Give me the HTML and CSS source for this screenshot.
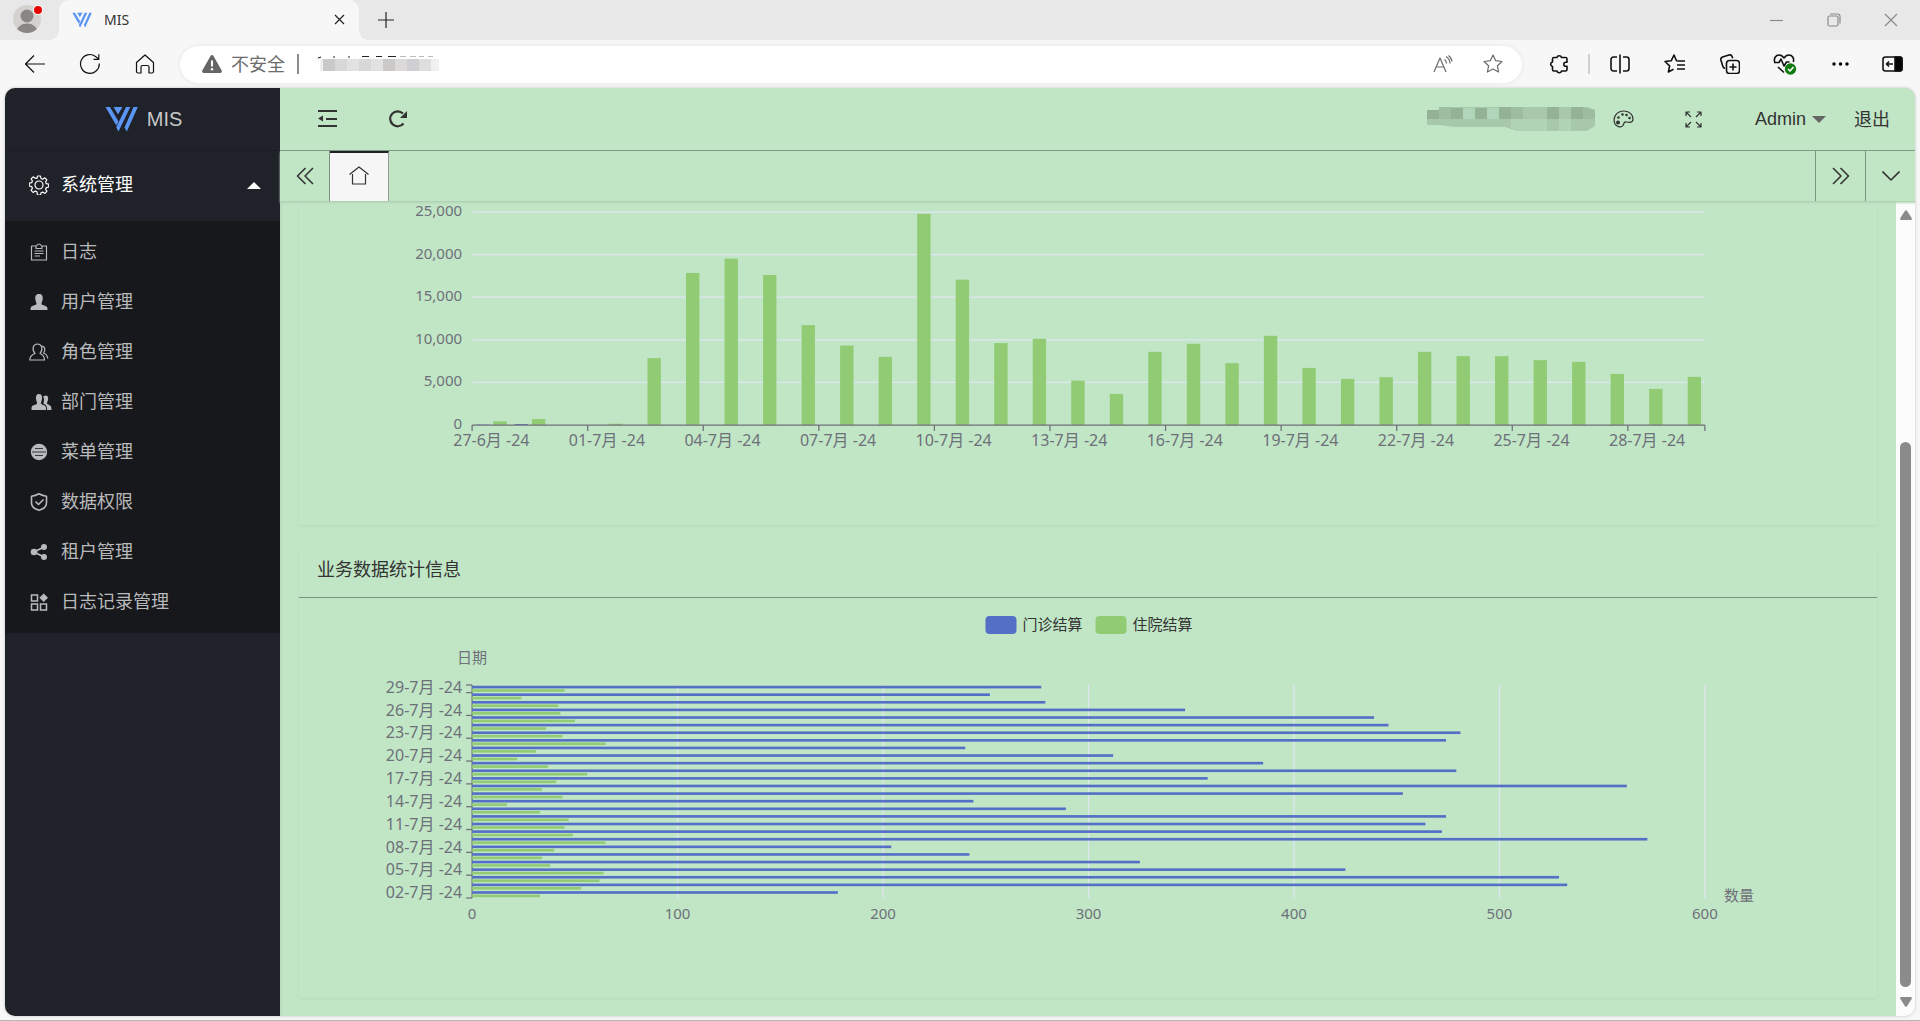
FILE: index.html
```html
<!DOCTYPE html>
<html lang="zh-CN">
<head>
<meta charset="utf-8">
<title>MIS</title>
<link rel="stylesheet" href="styles.css">
</head>
<body>
<header class="titlebar">
  <button class="profile" aria-label="Profile">
    <svg width="32" height="32" viewBox="0 0 32 32"><defs><clipPath id="face"><circle cx="14" cy="17" r="14"/></clipPath></defs><circle cx="14" cy="17" r="14" fill="#d4d2ce"/><g clip-path="url(#face)" fill="#8a8683"><circle cx="14" cy="14" r="6.500"/><ellipse cx="14" cy="30" rx="10.500" ry="8.500"/></g><circle cx="25" cy="8" r="5" fill="#fff"/><circle cx="25" cy="8" r="4" fill="#e60000"/></svg>
  </button>
  <div class="browser-tab">
    <svg width="20" height="16" viewBox="0 0 33 26" fill="#5b96f5"><use href="#mark"/></svg>
    <span class="tab-title">MIS</span>
    <button class="tab-close" aria-label="Close tab"><svg width="11" height="11" viewBox="0 0 11 11" class="ln"><path d="M1 1l9 9M10 1l-9 9"/></svg></button>
  </div>
  <button class="new-tab" aria-label="New tab"><svg width="18" height="18" viewBox="0 0 18 18" class="ln"><path d="M9 1v16M1 9h16"/></svg></button>
  <div class="window-buttons">
    <button aria-label="Minimize"><svg width="14" height="14" viewBox="0 0 14 14" class="ln"><path d="M0 7.500h13"/></svg></button>
    <button aria-label="Restore"><svg width="14" height="14" viewBox="0 0 14 14" class="ln"><rect x="1" y="3" width="10" height="10" rx="1.500"/><path d="M3 1h7.500a2.500 2.500 0 0 1 2.500 2.500V10.500"/></svg></button>
    <button aria-label="Close"><svg width="14" height="14" viewBox="0 0 14 14" class="ln"><path d="M1 1l12 12M13 1L1 13"/></svg></button>
  </div>
</header>

<nav class="toolbar">
  <button aria-label="Back"><svg width="22" height="20" viewBox="0 0 22 20" class="ln"><path d="M21 10H1.500M10 1.500L1.500 10l8.500 8.500"/></svg></button>
  <button aria-label="Reload"><svg width="22" height="22" viewBox="0 0 22 22" class="ln"><path d="M20.300 10.500A9.400 9.400 0 1 1 16.500 3.400L19.500 6M19.800 1.200V6.300H14.500"/></svg></button>
  <button aria-label="Home"><svg width="20" height="20" viewBox="0 0 20 20" class="ln"><path d="M1.500 8.500L10 1l8.500 7.500V17.500a1.500 1.500 0 0 1-1.500 1.500h-3v-6a1.500 1.500 0 0 0-1.500-1.500h-5A1.500 1.500 0 0 0 6 13v6H3a1.500 1.500 0 0 1-1.500-1.500z"/></svg></button>
  <div class="address">
    <button class="security">
      <svg width="20" height="18" viewBox="0 0 20 18"><path d="M8.500 1a1.700 1.700 0 0 1 3 0l8.200 14.500a1.700 1.700 0 0 1-1.500 2.500H1.800a1.700 1.700 0 0 1-1.500-2.500z" fill="#666"/><path d="M10 5.500v6" stroke="#fff" stroke-width="2"/><circle cx="10" cy="14.200" r="1.200" fill="#fff"/></svg>
      <span>不安全</span>
    </button>
    <span class="sep"></span>
    <svg class="masked-url" width="122" height="16" viewBox="0 0 122 16"><path d="M1 2l3-1M16 1h2M31 1h2M45 .500h7M59 .500h6M71 .500h8" stroke="#222" stroke-width="1.200"/><path d="M83 .500h6M93 .500h6M102 .500h5M111 .500h5" stroke="#bbb"/><g><path fill="#f0f0f0" d="M3 3h119v12H3z"/><path fill="#c9c9c9" d="M6 3h12v12H6z"/><path fill="#d8d8d8" d="M18 3h12v12H18zM42 3h12v12H42z"/><path fill="#e2e2e2" d="M30 3h12v12H30zM54 3h12v12H54z"/><path fill="#cbc9c8" d="M66 3h12v12H66z"/><path fill="#dcdad8" d="M78 3h12v12H78z"/><path fill="#cfcfd3" d="M90 3h12v12H90z"/><path fill="#dedede" d="M102 3h12v12h-12z"/></g></svg>
    <div class="address-actions">
      <button aria-label="Read aloud"><svg width="20" height="18" viewBox="0 0 20 18" class="ln"><path d="M1 17L7 3l6 14M3 12h8M11.500 4.500q2 1.500 2 4M13 1.500q4 2.500 4 7M15.500 .500q3 2 3.500 6"/></svg></button>
      <button aria-label="Favourite"><svg width="20" height="20" viewBox="0 0 20 20" class="ln"><path d="M10 1l2.700 5.700 6.300.8-4.600 4.300 1.200 6.200L10 15l-5.600 3 1.200-6.200L1 7.500l6.300-.8z"/></svg></button>
    </div>
  </div>
  <button class="ext" aria-label="Extensions"><svg width="20" height="20" viewBox="0 0 20 20" class="ln bold"><path d="M5 3.500h3a2.300 2.300 0 0 1 4.500 0H16.500a1.500 1.500 0 0 1 1.500 1.500v3.200h-1.200a2 2 0 0 0 0 4H18V15.500a1.500 1.500 0 0 1-1.500 1.500h-4a2.300 2.300 0 0 1-4.500 0H5a1.500 1.500 0 0 1-1.500-1.500V12.500a2.300 2.300 0 0 1 0-4.500V5A1.500 1.500 0 0 1 5 3.500z"/></svg></button>
  <span class="sep light"></span>
  <button aria-label="Split screen"><svg width="20" height="20" viewBox="0 0 20 20" class="ln bold"><path d="M7 3H3.500A2.500 2.500 0 0 0 1 5.500v9A2.500 2.500 0 0 0 3.500 17H7M13 3h3.500A2.500 2.500 0 0 1 19 5.500v9A2.500 2.500 0 0 1 16.500 17H13M10 .500v19"/></svg></button>
  <button aria-label="Favourites"><svg width="21" height="20" viewBox="0 0 21 20" class="ln bold"><path d="M14.500 7L12.500 6.700 10 1 7.300 6.700 1 7.500l4.600 4.300L4.400 18 9.500 15.300M13 7h8M13 11h8M13 15h8"/></svg></button>
  <button aria-label="Collections"><svg width="20" height="20" viewBox="0 0 20 20" class="ln bold"><path d="M5 14.500C3.500 14 3 13 2.700 12L.900 6C.500 4.500 1.300 3.500 2.500 3L9 1c1.500-.400 2.700.3 3.200 1.700l.5 1.500"/><rect x="6.500" y="6.500" width="13" height="13" rx="3"/><path d="M13 9.500v7M9.500 13h7"/></svg></button>
  <button aria-label="Browser essentials"><svg width="24" height="22" viewBox="0 0 24 22" class="ln bold"><path d="M1.700 9C.500 5 3 2 6 2c2.500 0 4 1.500 5 3 1-1.500 2.500-3 5-3 3 0 5.500 3 4.300 7M5 14l6 5.500M1 9.500h5l2-3.500 3 7 2.500-4h3"/><circle cx="17.500" cy="16" r="5.700" fill="#107c10" stroke="none"/><path d="M15 16l2 2 3.500-4" stroke="#fff"/></svg></button>
  <button aria-label="More"><svg width="18" height="6" viewBox="0 0 18 6"><circle cx="3" cy="3" r="1.700"/><circle cx="9.500" cy="3" r="1.700"/><circle cx="16" cy="3" r="1.700"/></svg></button>
  <button class="side-toggle" aria-label="Sidebar"><svg width="21" height="16" viewBox="0 0 21 16" class="ln bold"><rect x="1" y="1" width="19" height="14" rx="2.500"/><path d="M13 1h5a2 2 0 0 1 2 2v10a2 2 0 0 1-2 2h-5z" fill="#000"/><path d="M11 8H4.500M7 5.500L4.500 8 7 10.500"/></svg></button>
</nav>

<div class="app">
  <aside class="sidebar">
    <a class="logo" href="#"><svg width="33" height="26" viewBox="0 0 33 26" fill="#5b96f5"><g id="mark"><path d="M.500 1h4.500l8.500 14.500-2.200 4z"/><path d="M8.500 1h9l-4.500 7.500z"/><path d="M21 1h4.300L13.500 25.500 11.200 21.500z"/><path d="M28.500 1h4.300L21.800 25.500 19.500 21.500z"/></g></svg><span>MIS</span></a>
    <button class="group">
      <svg width="20" height="20" viewBox="0 0 20 20" class="ln"><path d="M8.500 1h3l.5 2.500 1.700.7 2.200-1.400 2 2-1.300 2.200.7 1.700 2.400.500v2.800l-2.400.6-.700 1.700 1.300 2.100-2 2-2.200-1.300-1.700.7-.500 2.400h-3L8 16.800l-1.700-.7-2.200 1.300-2-2 1.300-2.100-.7-1.700-2.400-.6V8.200l2.400-.500.7-1.700-1.300-2.200 2-2 2.200 1.400L8 3.500z"/><circle cx="10" cy="10" r="4"/></svg>
      <span>系统管理</span>
      <svg class="caret" width="14" height="7" viewBox="0 0 14 7"><path d="M0 7l7-7 7 7z" fill="#fff"/></svg>
    </button>
    <nav class="submenu">
      <a href="#"><svg width="20" height="18" viewBox="0 0 20 18" class="ln"><path d="M7 3H2.500v14h15V3H13M5.500 8h9M5.500 10.500h9M5.500 13h5.500M7 5.500V3.500q3-5 6 0v2z"/></svg><span>日志</span></a>
      <a href="#"><svg width="20" height="18" viewBox="0 0 20 18"><path d="M10 1c3 0 4 2 3.700 5-.3 2.500-1.200 3.500-1.200 5 0 1 4 1.700 5 2.500 1 .700 1 2 1 3.500h-17c0-1.500 0-2.800 1-3.500 1-.800 5-1.500 5-2.500 0-1.500-.900-2.500-1.200-5C6 3 7 1 10 1z"/></svg><span>用户管理</span></a>
      <a href="#"><svg width="20" height="18" viewBox="0 0 20 18" class="ln"><path d="M6 10.500C2.500 6 4 1 8.500 1s6 5 2.500 9.500c3 1.200 4.500 3 4.500 6.500H.800c0-3.500 2-5.300 5.200-6.500zM12.500 3c3.500 0 4.300 4 2 7 3 1 4 3 4.300 5.500"/></svg><span>角色管理</span></a>
      <a href="#"><svg width="20" height="18" viewBox="-1 0 20 18"><path d="M9 1c2.500 0 3.500 2 3 5-.3 2-1 3-1 4.500 0 1 3 1.500 4 2.300 1 .700 1 2.200 1 4.200H1.500c0-2 0-3.500 1-4.200 1-.800 4.500-1.300 4.500-2.300C7 9 6.300 8 6 6 5.500 3 6.500 1 9 1zM15.500 2.500c2.500 0 3 2 2.500 4.200-.3 1.800-1 2.300-1 3.800 0 .800 2.500 1.300 3.500 2.300.7.700 1 2.200 1 4.200H17c0-4-.500-5-3.500-6.300 0-1.700 1.500-4.700-.5-7.200z"/></svg><span>部门管理</span></a>
      <a href="#"><svg width="20" height="18" viewBox="0 0 20 18"><circle cx="10" cy="9" r="8.200"/><path d="M6 5.500h8M3 9h14M6 12.500h8" stroke="#17181c" stroke-width=".8"/></svg><span>菜单管理</span></a>
      <a href="#"><svg width="20" height="18" viewBox="0 0 20 18" class="ln bold"><path d="M10 .800c2.500 1.500 5 2.200 7.500 2.400V10c0 3.500-3 6-7.500 7.300C5.500 16 2.500 13.500 2.500 10V3.200C5 3 7.500 2.300 10 .800zM6.500 8.500l3 3 5-5"/></svg><span>数据权限</span></a>
      <a href="#"><svg width="20" height="18" viewBox="0 0 20 18"><path d="M15 4L5 9l10 5" fill="none" stroke="#b9babb" stroke-width="1.800"/><circle cx="15" cy="4" r="3"/><circle cx="15" cy="14" r="3"/><circle cx="5" cy="9" r="3.300"/></svg><span>租户管理</span></a>
      <a href="#"><svg width="20" height="18" viewBox="0 0 20 18"><path d="M2.500 2h6v6h-6zM2.500 11h6v6h-6zM11.500 11h6v6h-6z" fill="none" stroke="#b9babb" stroke-width="1.500"/><path d="M14.700 .500l4.300 4.200-4.300 4.300-4.300-4.300z"/></svg><span>日志记录管理</span></a>
    </nav>
  </aside>

  <main class="main">
    <div class="topbar">
      <button class="tool" aria-label="Collapse menu"><svg width="20" height="18" viewBox="0 0 20 18"><path d="M0 0h19v2H0zM8 8h11v2H8zM0 15h19v2H0zM0 8.500L5 5.500v6z" fill="#333"/></svg></button>
      <button class="tool" aria-label="Refresh"><svg width="19" height="18" viewBox="0 0 19 18"><path d="M14.500 13.500A7.500 7.500 0 1 1 14 3.500" fill="none" stroke="#333" stroke-width="2.200"/><path d="M18 1v7h-7z" fill="#333"/></svg></button>
      <svg class="masked-name" width="168" height="24" viewBox="0 0 168 24"><path d="M0 3h12V0h148l8 3v16l-8 5H90l-12-4H28l-16-2H0z" fill="#a8c8ac"/><path d="M0 3h12v9H0zM24 1h12v11H24zM48 1h12v11H48zM72 0h12v12H72zM120 0h12v12h-12zM144 0h12v12h-12z" fill="#93b296"/><path d="M36 1h12v11H36zM60 1h12v11H60z" fill="#afd6b8"/><path d="M12 0h12v12H12zM84 0h12v12H84zM156 0l12 3v9h-12z" fill="#9dbda1"/><path d="M84 12h36v12H92l-8-3zM132 12h12v12h-12z" fill="#b0d3b6"/></svg>
      <button class="tool narrow" aria-label="Theme"><svg width="21" height="18" viewBox="0 0 21 18" class="ln"><path d="M2 14C-1 7 4 1 11 1c6 0 9 4.500 9 8 0 4-3.500 3.500-6.500 3-3-.500-2.500 1.500-3.500 3.500-1.500 2.500-6.500 1.500-8-1.500z"/><g fill="#333" stroke="none"><circle cx="5" cy="12.500" r="2"/><circle cx="5.500" cy="7.500" r="1.300"/><circle cx="9.500" cy="4.500" r="1.300"/><circle cx="13.500" cy="5" r="1.300"/><circle cx="16.500" cy="8" r="1.300"/></g></svg></button>
      <button class="tool narrow" aria-label="Full screen"><svg width="17" height="17" viewBox="0 0 17 17" class="ln"><path d="M1 5V1h4M1 1l5 5M12 1h4v4M16 1l-5 5M16 12v4h-4M16 16l-5-5M5 16H1v-4M1 16l5-5"/></svg></button>
      <button class="user">Admin<svg width="14" height="7" viewBox="0 0 14 7"><path d="M0 0h14L7 7z" fill="#666"/></svg></button>
      <a class="logout" href="#">退出</a>
    </div>
    <div class="tabs">
      <button class="scroll-tabs first" aria-label="Previous tabs"><svg width="18" height="18" viewBox="0 0 18 18" class="ln bold"><path d="M9.500 1L1.500 9l8 8M17 1L9 9l8 8"/></svg></button>
      <button class="page-tab" aria-label="Home page"><svg width="20" height="19" viewBox="0 0 20 19" class="ln"><path d="M.500 8.500L10 1l9.500 7.500M3.500 8v10h13V8"/></svg></button>
      <span class="tab-space"></span>
      <button class="scroll-tabs" aria-label="Next tabs"><svg width="18" height="18" viewBox="0 0 18 18" class="ln bold"><path d="M1 1l8 8-8 8M8.500 1l8 8-8 8"/></svg></button>
      <button class="scroll-tabs" aria-label="Tab menu"><svg width="18" height="10" viewBox="0 0 18 10" class="ln bold"><path d="M.500 .500L9 9l8.500-8.500"/></svg></button>
    </div>
    <div class="viewport">
      <div class="content">
        <section class="card"><div class="card-body"><svg class="chart" id="daily"></svg></div></section>
        <section class="card">
          <h2>业务数据统计信息</h2>
          <div class="card-body"><svg class="chart" id="business"></svg></div>
        </section>
      </div>
      <div class="scrollbar">
        <svg width="12" height="10" viewBox="0 0 12 10"><path d="M5 .800q1-1.200 2 0l4.800 7.500q.3 1.700-1 1.700H1.200Q-.100 10 .200 8.300z" fill="#8b8b8b"/></svg>
        <div class="track"><div class="thumb"></div></div>
        <svg width="12" height="10" viewBox="0 0 12 10"><path d="M5 9.200q1 1.200 2 0l4.800-7.500Q12.100 0 10.800 0H1.200Q-.100 0 .200 1.700z" fill="#8b8b8b"/></svg>
      </div>
    </div>
  </main>
</div>
<script src="charts.js"></script>
</body>
</html>
```
FILE: styles.css
```css
* { box-sizing: border-box; }

body {
  margin: 0;
  height: 100vh;
  display: flex;
  flex-direction: column;
  overflow: hidden;
  background: #f7f7f7;
  border-bottom: 1px solid #b5b5b5;
  font: 18px/24px "Noto Sans", "Noto Sans CJK SC", sans-serif;
  color: #333;
}

button {
  border: 0;
  padding: 0;
  margin: 0;
  background: none;
  font: inherit;
  color: inherit;
  display: flex;
  align-items: center;
  justify-content: center;
}

a { color: inherit; text-decoration: none; }
svg { display: block; flex: none; }

.ln {
  fill: none;
  stroke: currentColor;
  stroke-width: 1.2;
  stroke-linejoin: round;
}
.ln.bold { stroke-width: 1.6; }

/* Browser chrome */
.titlebar {
  height: 40px;
  flex: none;
  display: flex;
  background: #e8e8e8;
}
.profile {
  width: 59px;
  padding: 0 2px 4px 0;
}
.browser-tab {
  position: relative;
  width: 300px;
  padding: 0 8px 1px 13px;
  display: flex;
  align-items: center;
  background: #f7f7f7;
  border-radius: 10px 10px 0 0;
}
.browser-tab::before,
.browser-tab::after {
  content: "";
  position: absolute;
  bottom: 0;
  width: 10px;
  height: 10px;
}
.browser-tab::before {
  left: -10px;
  background: radial-gradient(circle at 0 0, #e8e8e8 10px, #f7f7f7 10px);
}
.browser-tab::after {
  right: -10px;
  background: radial-gradient(circle at 100% 0, #e8e8e8 10px, #f7f7f7 10px);
}
.tab-title {
  flex: 1;
  padding-left: 12px;
  font-size: 14px;
}
.tab-close { width: 24px; height: 24px; color: #222; }
.new-tab { width: 54px; padding-bottom: 1px; color: #222; }
.window-buttons {
  margin-left: auto;
  padding: 0 1px 1px 0;
  display: flex;
  color: #8a8a8a;
}
.window-buttons button { width: 57px; }

.toolbar {
  height: 48px;
  flex: none;
  display: flex;
  align-items: center;
  padding: 0 3px 0 7px;
  color: #111;
}
.toolbar > button { width: 55px; height: 40px; }
.toolbar .side-toggle { width: 50px; }
.address {
  flex: 1;
  height: 37px;
  margin: 0 9px 0 8px;
  padding: 0 4px 0 22px;
  display: flex;
  align-items: center;
  background: #fff;
  border-radius: 19px;
  box-shadow: 0 0 4px #e4e4e4;
  color: #6b6b6b;
}
.security { gap: 9px; }
.sep {
  width: 2px;
  height: 20px;
  margin: 0 18px 0 12px;
  background: #8c8c8c;
}
.sep.light { margin: 0 2px; background: #d0d0d0; }
.address-actions { margin-left: auto; display: flex; }
.address-actions button { width: 50px; height: 32px; }

/* Application frame */
.app {
  flex: 1;
  min-height: 0;
  margin: 0 5px 4px;
  display: flex;
  border-radius: 10px;
  overflow: hidden;
  background: #c1e6c6;
  box-shadow: 0 0 3px #bdbdbd;
}

.sidebar {
  width: 275px;
  flex: none;
  background: #20222a;
  color: #b9babb;
}
.logo {
  height: 63px;
  padding-left: 2px;
  display: flex;
  align-items: center;
  justify-content: center;
  gap: 9px;
  border-bottom: 1px solid #1b1d23;
  font: 20px/24px "Liberation Sans", sans-serif;
  color: #c6c7c9;
}
.group {
  width: 100%;
  height: 70px;
  padding: 0 19px 2px 24px;
  gap: 12px;
  color: #fff;
}
.group .caret { margin-left: auto; }
.submenu {
  display: flex;
  flex-direction: column;
  padding: 6px 0;
  background: #17181c;
}
.submenu a {
  height: 50px;
  padding-left: 24px;
  display: flex;
  align-items: center;
  gap: 12px;
}
.submenu span, .group span { padding-bottom: 2px; }
.submenu svg { fill: #b9babb; overflow: visible; }
.submenu svg.ln { fill: none; }

.main {
  flex: 1;
  min-width: 0;
  display: flex;
  flex-direction: column;
}
.topbar {
  height: 63px;
  flex: none;
  display: flex;
  align-items: center;
  padding: 0 25px 0 13px;
  border-bottom: 1px solid #7a957e;
}
.tool { width: 70px; height: 50px; }
.tool.narrow { width: 58px; margin-right: 12px; }
.masked-name { margin-left: auto; }
.user {
  gap: 6px;
  margin: 0 28px 0 20px;
  font-family: "Liberation Sans", sans-serif;
}

.tabs {
  height: 51px;
  flex: none;
  display: flex;
  border-bottom: 1px solid #b1d3b5;
  box-shadow: 0 1px 2px #b4d7b8;
  position: relative;
}
.scroll-tabs { width: 50px; border-left: 1px solid #7a957e; }
.scroll-tabs.first { border-left: 0; border-right: 1px solid #7a957e; }
.page-tab {
  width: 59px;
  padding-bottom: 4px;
  background: #f6f6f6;
  border-top: 2px solid #20222a;
  border-right: 1px solid #999;
}
.tab-space { flex: 1; }

.viewport { flex: 1; min-height: 0; display: flex; }
.content {
  flex: 1;
  min-width: 0;
  padding: 0 19px 18px;
  display: flex;
  flex-direction: column;
  justify-content: flex-end;
  gap: 20px;
  overflow: hidden;
  box-shadow: inset 2px 0 2px #b9ddbe;
}
.card {
  flex: none;
  border-radius: 3px;
  box-shadow: 0 1px 3px #b6dabb;
}
.card h2 {
  margin: 0;
  height: 53px;
  padding: 0 18px;
  border-bottom: 1px solid #7a957e;
  font-size: 18px;
  font-weight: 400;
  line-height: 48px;
}
.card-body { padding: 12px 18px 25px 19px; }
.chart { width: 100%; height: 363px; }
.chart text { font-size: 15px; fill: #6e7079; }
.chart text.date { font-size: 16px; }
.chart text.legend { fill: #333; }
.chart .grid { stroke: #e0e6f1; stroke-width: 1.25; }
.chart .axis { stroke: #6e7079; stroke-width: 1.25; }
.outpatient { fill: #5470c6; }
.inpatient { fill: #91cc75; }

.scrollbar {
  width: 19px;
  flex: none;
  padding: 8px 0 9px;
  display: flex;
  flex-direction: column;
  align-items: center;
  background: #fcfcfc;
}
.track {
  flex: 1;
  padding-bottom: 10px;
  display: flex;
  flex-direction: column;
  justify-content: flex-end;
}
.thumb {
  width: 11px;
  height: 71%;
  border-radius: 6px;
  background: #8b8b8b;
}
```
FILE: charts.js
```js
const NS = 'http://www.w3.org/2000/svg';
const TOP = 75, PLOT = 213;

function add(svg, name, attrs, text) {
  const el = document.createElementNS(NS, name);
  for (const key in attrs) el.setAttribute(key, attrs[key]);
  if (text !== undefined) el.textContent = text;
  svg.appendChild(el);
}
const line = (svg, cls, x1, y1, x2, y2) => add(svg, 'line', { class: cls, x1, y1, x2, y2 });
const bar = (svg, cls, x, y, width, height) => add(svg, 'rect', { class: cls, x, y, width, height });
const label = (svg, x, y, anchor, text, cls = 'label') =>
  add(svg, 'text', { class: cls, x, y, 'text-anchor': anchor }, text);

const dailyIn = [430, 700, 0, 150, 7850, 17850, 19530, 17610, 11730, 9330, 8000, 24790, 17060, 9610, 10120,
  5210, 3650, 8590, 9530, 7260, 10470, 6700, 5410, 5610, 8590, 8080, 8080, 7610, 7410, 6000, 4235, 5650];
const dailyOut = [40, 110];
const dailyDates = ['27-6', '01-7', '04-7', '07-7', '10-7', '13-7', '16-7', '19-7', '22-7', '25-7', '28-7'];

function drawDaily() {
  const svg = document.getElementById('daily');
  svg.replaceChildren();
  const total = svg.getBoundingClientRect().width;
  const left = total * 0.1, width = total * 0.8, base = TOP + PLOT;
  for (let i = 0; i <= 5; i++) {
    const y = base - PLOT * i / 5;
    if (i) line(svg, 'grid', left, y, left + width, y);
    label(svg, left - 10, y + 4, 'end', (i * 5000).toLocaleString('en-US'));
  }
  const band = width / dailyIn.length, thick = band * 0.8 / 2.3;
  dailyIn.forEach((value, i) => {
    const h = value / 25000 * PLOT;
    bar(svg, 'inpatient', left + i * band + band * 0.1 + thick * 1.3, base - h, thick, h);
  });
  dailyOut.forEach((value, i) => {
    const h = value / 25000 * PLOT;
    bar(svg, 'outpatient', left + i * band + band * 0.1, base - h, thick, h);
  });
  line(svg, 'axis', left, base, left + width, base);
  dailyDates.forEach((date, i) => {
    const x = left + band * 3 * i;
    line(svg, 'axis', x, base, x, base + 6);
    label(svg, x + band / 2, base + 21, 'middle', date + '月 -24', 'date');
  });
  line(svg, 'axis', left + width, base, left + width, base + 6);
}

/* Values run from 29-7 down to 02-7 */
const outpatient = [277, 252, 279, 347, 439, 446, 481, 474, 240, 312, 385, 479, 358, 562, 453, 244, 289, 474,
  464, 472, 572, 204, 242, 325, 425, 529, 533, 178];
const inpatient = [45, 24, 42, 43, 50, 36, 44, 65, 31, 22, 37, 56, 41, 34, 44, 17, 33, 47, 45, 49, 65, 40, 34,
  38, 64, 62, 53, 33];

function drawBusiness() {
  const svg = document.getElementById('business');
  svg.replaceChildren();
  const total = svg.getBoundingClientRect().width;
  const left = total * 0.1, width = total * 0.8, base = TOP + PLOT, mid = total / 2;
  add(svg, 'rect', { class: 'outpatient', x: mid - 103, y: 6, width: 31, height: 18, rx: 4 });
  label(svg, mid - 66, 20, 'start', '门诊结算', 'legend');
  add(svg, 'rect', { class: 'inpatient', x: mid + 7, y: 6, width: 31, height: 18, rx: 4 });
  label(svg, mid + 44, 20, 'start', '住院结算', 'legend');
  label(svg, left, 53, 'middle', '日期');
  label(svg, left + width + 19, base + 3, 'start', '数量');
  for (let i = 0; i <= 6; i++) {
    const x = left + width * i / 6;
    if (i) line(svg, 'grid', x, TOP, x, base);
    label(svg, x, base + 21, 'middle', i * 100);
  }
  const band = PLOT / outpatient.length, thick = band * 0.8 / 2.3;
  line(svg, 'axis', left, TOP, left, base);
  outpatient.forEach((value, i) => {
    const y = TOP + i * band + band * 0.1;
    bar(svg, 'outpatient', left, y, value / 600 * width, thick);
    bar(svg, 'inpatient', left, y + thick * 1.3, inpatient[i] / 600 * width, thick);
  });
  line(svg, 'axis', left - 6, TOP, left, TOP);
  for (let i = 0; i < 10; i++) {
    const y = base - band * 3 * i;
    line(svg, 'axis', left - 6, y, left, y);
    label(svg, left - 10, y - band / 2 + 4, 'end', String(2 + 3 * i).padStart(2, '0') + '-7月 -24', 'date');
  }
}

function draw() { drawDaily(); drawBusiness(); }
draw();
window.addEventListener('resize', draw);
```
